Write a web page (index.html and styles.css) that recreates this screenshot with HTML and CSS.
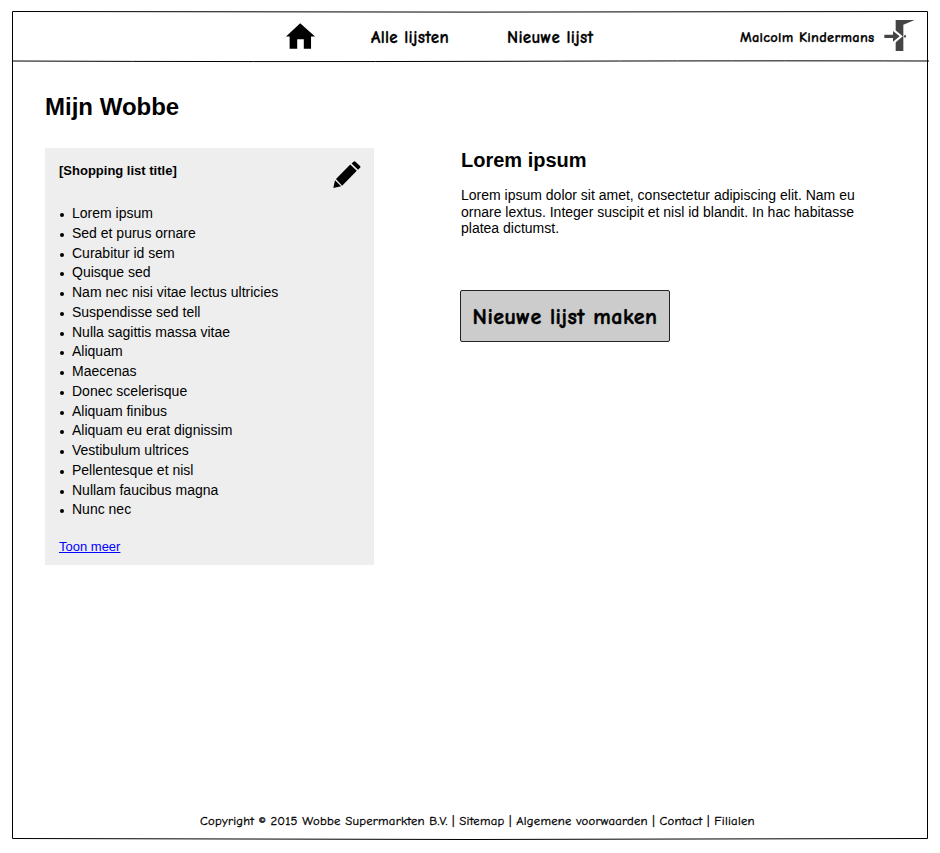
FILE: index.html
```html
<!DOCTYPE html>
<html lang="nl">
<head>
<meta charset="utf-8">
<title>Mijn Wobbe</title>
<link rel="stylesheet" href="styles.css">
</head>
<body>
<div class="page">
  <svg class="frame" viewBox="0 0 940 853" aria-hidden="true">
    <path d="M12.5 11.5Q470 12.7 927.5 11.5V838.5Q470 840.5 12.5 838.5Z"/>
    <path d="M13 61Q250 62 500 61.3T929 61"/>
  </svg>
  <header class="header">
    <nav class="nav">
      <a class="home" href="#" aria-label="Home"><svg viewBox="48 54 88 77"><path d="M91 54L136 94H124V131H102V102H82V131H59V94H48Z"/></svg></a>
      <a class="all" href="#">Alle lijsten</a>
      <a class="new" href="#">Nieuwe lijst</a>
    </nav>
    <div class="user">
      <span class="name">Malcolm Kindermans</span>
      <a class="logout" href="#" aria-label="Uitloggen"><svg viewBox="12 24 93 93"><path d="M47 24H104L70 38V117H47Z"/><path class="arrow-gap" d="M43 57L62 73L43 89"/><path d="M13 68H39V57L59 73L39 89V78H13Z"/><ellipse cx="75" cy="73" rx="3" ry="4"/></svg></a>
    </div>
  </header>
  <main class="main">
    <h1>Mijn Wobbe</h1>
    <div class="columns">
      <section class="list-card">
        <div class="card-head">
          <h3>[Shopping list title]</h3>
          <a class="edit" href="#" aria-label="Bewerken"><svg viewBox="878 62 84 83"><path d="M886 117L930 73L950 92L905 138Z"/><path d="M934 70L940 64Q943 61 946 64L960 77Q963 80 960 83L954 89Z"/><path d="M878 145L883 121L902 140Z"/></svg></a>
        </div>
        <ul>
          <li>Lorem ipsum</li><li>Sed et purus ornare</li><li>Curabitur id sem</li><li>Quisque sed</li>
          <li>Nam nec nisi vitae lectus ultricies</li><li>Suspendisse sed tell</li><li>Nulla sagittis massa vitae</li><li>Aliquam</li>
          <li>Maecenas</li><li>Donec scelerisque</li><li>Aliquam finibus</li><li>Aliquam eu erat dignissim</li>
          <li>Vestibulum ultrices</li><li>Pellentesque et nisl</li><li>Nullam faucibus magna</li><li>Nunc nec</li>
        </ul>
        <a class="more" href="#">Toon meer</a>
      </section>
      <section class="intro">
        <h2>Lorem ipsum</h2>
        <p>Lorem ipsum dolor sit amet, consectetur adipiscing elit. Nam eu ornare lextus. Integer suscipit et nisl id blandit. In hac habitasse platea dictumst.</p>
        <button class="create" type="button">Nieuwe lijst maken</button>
      </section>
    </div>
  </main>
  <footer class="footer">Copyright © 2015 Wobbe Supermarkten B.V. | Sitemap | Algemene voorwaarden | Contact | Filialen</footer>
</div>
</body>
</html>
```
FILE: styles.css
```css
* { box-sizing: border-box; }
body { margin: 0; background: #fff; color: #000; font-family: "Liberation Sans", Arial, sans-serif; font-size: 14px; }
.page { position: relative; display: flex; flex-direction: column; height: 853px; padding: 12px 12px 14px 13px; }
.frame { position: absolute; inset: 0; width: 940px; height: 853px; fill: none; stroke: #000; stroke-width: 1; pointer-events: none; }
.header { display: flex; justify-content: space-between; height: 50px; padding-left: 273px; font-family: "Comic Sans MS", "Comic Neue", Lato, sans-serif; font-weight: 700; white-space: nowrap; }
.header a { color: inherit; text-decoration: none; }
.header svg, .edit svg { display: block; width: 100%; height: 100%; }
.nav { display: flex; align-items: center; font-size: 17px; letter-spacing: .3px; -webkit-text-stroke: .3px #000; }
.home { width: 29px; height: 26px; margin: 0 56px 2px 0; }
.all { width: 136px; }
.user { display: flex; align-items: center; font-size: 14.5px; letter-spacing: .25px; -webkit-text-stroke: .25px #000; }
.name { width: 144px; }
.logout { width: 31px; height: 31px; margin-right: 13px; margin-bottom: 4px; fill: #444; }
.arrow-gap { fill: none; stroke: #fff; stroke-width: 8; }
.main { flex: 1; padding: 30px 32px 0; }
h1, h2, h3, p, ul { margin: 0; padding: 0; }
h1 { font-size: 24px; line-height: 30px; }
.columns { display: flex; gap: 87px; margin-top: 26px; align-items: flex-start; }
.list-card { width: 329px; height: 417px; padding: 13px 13px 13px 14px; background: #eee; }
.card-head { display: flex; justify-content: space-between; height: 42.8px; }
h3 { font-size: 13px; line-height: 20px; }
.edit { width: 28px; height: 27px; }
ul { list-style: none; }
li { display: flex; align-items: center; gap: 8px; height: 19.75px; line-height: 19px; }
li::before { content: ""; width: 4px; height: 4px; margin: 3px 0 0 1px; border-radius: 50%; background: #000; }
.more { display: block; margin-top: 16.8px; font-size: 13px; line-height: 20px; color: #00f; }
.intro { width: 410px; }
h2 { font-size: 20px; line-height: 24px; }
.intro p { margin-top: 15px; line-height: 16.5px; }
.create { display: block; width: 210px; height: 52px; margin-top: 53px; margin-left: -1px; padding: 2px 0 0; border: 1px solid #222; border-radius: 2px; background: #ccc; color: #000; font: 700 22px "Comic Sans MS", "Comic Neue", Lato, sans-serif; letter-spacing: .45px; -webkit-text-stroke: .5px #000; white-space: nowrap; }
.footer { height: 28px; margin-left: 187px; font: 12.7px/20px "Comic Sans MS", "Comic Neue", Lato, sans-serif; letter-spacing: .26px; -webkit-text-stroke: .3px #000; white-space: nowrap; }
```
